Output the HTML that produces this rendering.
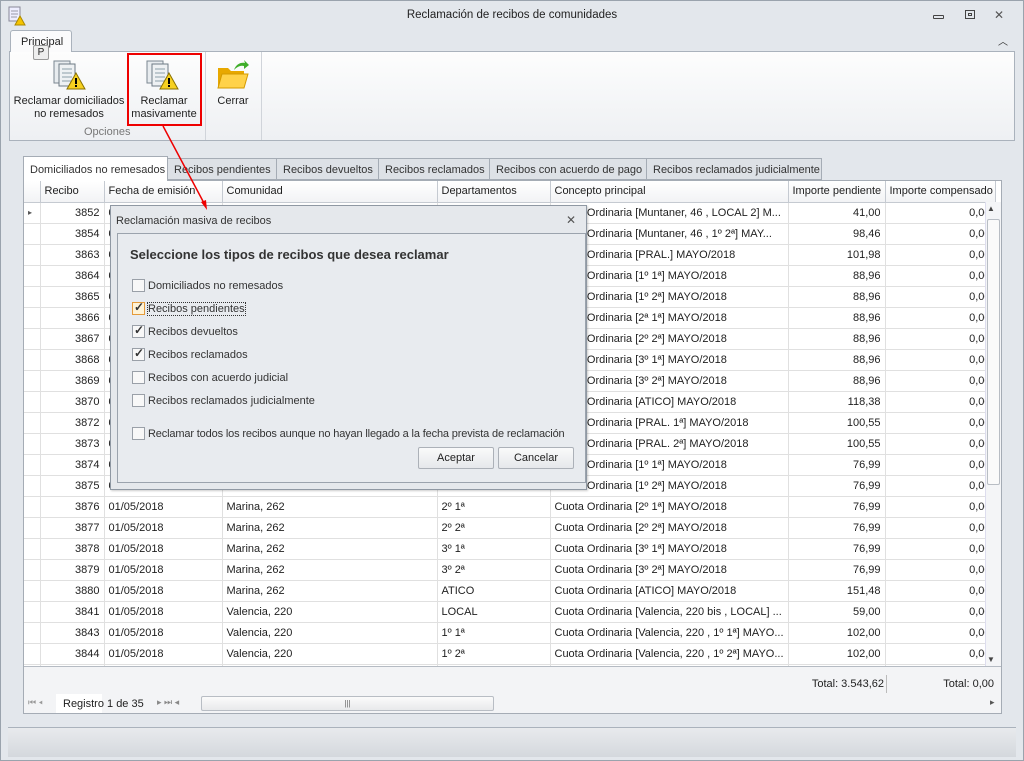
<!DOCTYPE html>
<html><head><meta charset="utf-8">
<style>
*{box-sizing:border-box;margin:0;padding:0}
body{width:1024px;height:761px;overflow:hidden;background:#dfe3e8;font-family:"Liberation Sans",sans-serif;font-size:11px;color:#1e1e1e;position:relative}
.abs{position:absolute;white-space:nowrap}
.win{left:0;top:0;width:1024px;height:761px;border:1px solid #9aa3ad;background:#e3e7ec}
.title{left:0;top:0;width:1024px;height:30px;text-align:center;line-height:30px;font-size:11.5px;color:#222}
.ribbon{left:9px;top:51px;width:1006px;height:90px;background:linear-gradient(#fdfdfd,#eef0f3);border:1px solid #aab2bc}
.tabP{left:10px;top:30px;width:62px;height:22px;background:#fbfbfc;border:1px solid #aab2bc;border-bottom:none;border-radius:3px 3px 0 0;padding:5px 0 0 10px;font-size:11px}
.btn{text-align:center;font-size:11px;line-height:13px;color:#222}
.grid{left:23px;top:180px;width:979px;height:534px;border:1px solid #a5acb5;background:#fff;overflow:hidden}
table{border-collapse:collapse;table-layout:fixed;position:absolute;left:0;top:0;width:971px}
td{height:21px;border-right:1px solid #e0e0e0;border-bottom:1px solid #e0e0e0;white-space:nowrap;overflow:hidden;padding:0 4px;font-size:11px}
th{height:21px;background:linear-gradient(#fff,#f2f3f5);border-right:1px solid #c5cad1;border-bottom:1px solid #c5cad1;font-weight:normal;text-align:left;padding:0 4px;font-size:11px;white-space:nowrap;overflow:hidden}
td.r{text-align:right}
.tab{top:158px;height:22px;border:1px solid #a5acb5;background:#dde1e6;padding:5px 0 0 6px;font-size:11px;color:#333}
.cb{display:inline-block;width:13px;height:13px;border:1px solid #9aa0a8;background:#f8f8f8;vertical-align:-3px;margin-right:3px;position:relative}
.opt{left:132px;font-size:11px;color:#333}
.b2{height:22px;border:1px solid #acb1b8;background:linear-gradient(#fafafa,#e6e8eb);border-radius:2px;text-align:center;line-height:20px;font-size:11px}
</style></head><body>
<div class="abs win"></div>
<div class="abs title">Reclamación de recibos  de comunidades</div>
<svg class="abs" style="left:7px;top:6px" width="20" height="20"><rect x="2" y="1" width="11" height="14" fill="#eef" stroke="#889"/><path d="M4 5h7M4 8h7M4 11h6" stroke="#99a"/><path d="M13 10l5 9h-10z" fill="#f5c400" stroke="#a80"/></svg>
<div class="abs" style="left:933px;top:15px;width:11px;height:4px;border:1px solid #444;border-radius:1px"></div>
<div class="abs" style="left:965px;top:10px;width:10px;height:9px;border:1px solid #444"><div style="margin:2px;width:4px;height:3px;border:1px solid #444"></div></div>
<div class="abs" style="left:994px;top:8px;font-size:12px;color:#555">✕</div>
<div class="abs" style="left:998px;top:33px;font-size:10px;color:#333">︿</div>
<div class="abs ribbon"></div>
<div class="abs tabP">Principal</div>
<div class="abs" style="left:33px;top:45px;width:16px;height:15px;border:1px solid #999;background:#eee;font-size:10px;text-align:center;line-height:13px;border-radius:2px">P</div>
<svg class="abs" style="left:53px;top:59px" width="34" height="32"><rect x="1" y="2" width="16" height="22" fill="#e8ecef" stroke="#7a8690"/><rect x="6" y="5" width="16" height="22" fill="#eef1f3" stroke="#6e7a85"/><path d="M9 10h10M9 14h10M9 18h10M9 22h10" stroke="#8ca0a8"/><path d="M23 14l9 16h-18z" fill="#f6d020" stroke="#8a7000"/><rect x="22" y="19" width="2" height="6" fill="#000"/><rect x="22" y="26" width="2" height="2" fill="#000"/></svg>
<svg class="abs" style="left:146px;top:59px" width="34" height="32"><rect x="1" y="2" width="16" height="22" fill="#e8ecef" stroke="#7a8690"/><rect x="6" y="5" width="16" height="22" fill="#eef1f3" stroke="#6e7a85"/><path d="M9 10h10M9 14h10M9 18h10M9 22h10" stroke="#8ca0a8"/><path d="M23 14l9 16h-18z" fill="#f6d020" stroke="#8a7000"/><rect x="22" y="19" width="2" height="6" fill="#000"/><rect x="22" y="26" width="2" height="2" fill="#000"/></svg>
<svg class="abs" style="left:216px;top:58px" width="34" height="32"><path d="M2 10h10l3 3h13v17H2z" fill="#e8a800"/><path d="M2 30l4-14h26l-4 14z" fill="#ffd24a" stroke="#d49a00"/><path d="M18 12c2-6 7-8 11-7l-1-3 5 5-5 4v-3c-4-1-7 1-10 4z" fill="#3fae2a"/></svg>
<div class="abs btn" style="left:11px;top:95px;width:116px">Reclamar domiciliados<br>no remesados</div>
<div class="abs btn" style="left:127px;top:95px;width:74px">Reclamar<br>masivamente</div>
<div class="abs btn" style="left:212px;top:95px;width:42px">Cerrar</div>
<div class="abs" style="left:84px;top:126px;color:#777;font-size:11px">Opciones</div>
<div class="abs" style="left:205px;top:52px;width:1px;height:88px;background:#d0d4da"></div>
<div class="abs" style="left:261px;top:52px;width:1px;height:88px;background:#d0d4da"></div>
<div class="abs" style="left:127px;top:53px;width:75px;height:73px;border:2px solid #e00"></div>
<div class="abs tab" style="left:167px;width:110px">Recibos pendientes</div>
<div class="abs tab" style="left:276px;width:103px">Recibos devueltos</div>
<div class="abs tab" style="left:378px;width:112px">Recibos reclamados</div>
<div class="abs tab" style="left:489px;width:158px">Recibos con acuerdo de pago</div>
<div class="abs tab" style="left:646px;width:176px">Recibos reclamados judicialmente</div>
<div class="abs tab" style="left:23px;top:156px;height:25px;width:145px;background:#fff;border-bottom:none;z-index:2;padding-top:7px">Domiciliados no remesados</div>
<div class="abs grid">
<table>
<colgroup><col style="width:16px"><col style="width:64px"><col style="width:118px"><col style="width:215px"><col style="width:113px"><col style="width:238px"><col style="width:97px"><col style="width:110px"></colgroup>
<tr><th></th><th>Recibo</th><th>Fecha de emisión</th><th>Comunidad</th><th>Departamentos</th><th>Concepto principal</th><th>Importe pendiente</th><th>Importe compensado</th></tr>
<tr><td style="font-size:8px;color:#555">▸</td><td class="r">3852</td><td>01/05/2018</td><td>Muntaner, 46</td><td>LOCAL 2</td><td>Cuota Ordinaria [Muntaner, 46 , LOCAL 2] M...</td><td class="r">41,00</td><td class="r">0,00</td></tr>
<tr><td></td><td class="r">3854</td><td>01/05/2018</td><td>Muntaner, 46</td><td>1º 2ª</td><td>Cuota Ordinaria [Muntaner, 46 , 1º 2ª] MAY...</td><td class="r">98,46</td><td class="r">0,00</td></tr>
<tr><td></td><td class="r">3863</td><td>01/05/2018</td><td>Marina</td><td>PRAL.</td><td>Cuota Ordinaria [PRAL.] MAYO/2018</td><td class="r">101,98</td><td class="r">0,00</td></tr>
<tr><td></td><td class="r">3864</td><td>01/05/2018</td><td>Marina</td><td>1º 1ª</td><td>Cuota Ordinaria [1º 1ª] MAYO/2018</td><td class="r">88,96</td><td class="r">0,00</td></tr>
<tr><td></td><td class="r">3865</td><td>01/05/2018</td><td>Marina</td><td>1º 2ª</td><td>Cuota Ordinaria [1º 2ª] MAYO/2018</td><td class="r">88,96</td><td class="r">0,00</td></tr>
<tr><td></td><td class="r">3866</td><td>01/05/2018</td><td>Marina</td><td>2ª 1ª</td><td>Cuota Ordinaria [2ª 1ª] MAYO/2018</td><td class="r">88,96</td><td class="r">0,00</td></tr>
<tr><td></td><td class="r">3867</td><td>01/05/2018</td><td>Marina</td><td>2º 2ª</td><td>Cuota Ordinaria [2º 2ª] MAYO/2018</td><td class="r">88,96</td><td class="r">0,00</td></tr>
<tr><td></td><td class="r">3868</td><td>01/05/2018</td><td>Marina</td><td>3º 1ª</td><td>Cuota Ordinaria [3º 1ª] MAYO/2018</td><td class="r">88,96</td><td class="r">0,00</td></tr>
<tr><td></td><td class="r">3869</td><td>01/05/2018</td><td>Marina</td><td>3º 2ª</td><td>Cuota Ordinaria [3º 2ª] MAYO/2018</td><td class="r">88,96</td><td class="r">0,00</td></tr>
<tr><td></td><td class="r">3870</td><td>01/05/2018</td><td>Marina</td><td>ATICO</td><td>Cuota Ordinaria [ATICO] MAYO/2018</td><td class="r">118,38</td><td class="r">0,00</td></tr>
<tr><td></td><td class="r">3872</td><td>01/05/2018</td><td>Marina</td><td>PRAL. 1ª</td><td>Cuota Ordinaria [PRAL. 1ª] MAYO/2018</td><td class="r">100,55</td><td class="r">0,00</td></tr>
<tr><td></td><td class="r">3873</td><td>01/05/2018</td><td>Marina</td><td>PRAL. 2ª</td><td>Cuota Ordinaria [PRAL. 2ª] MAYO/2018</td><td class="r">100,55</td><td class="r">0,00</td></tr>
<tr><td></td><td class="r">3874</td><td>01/05/2018</td><td>Marina</td><td>1º 1ª</td><td>Cuota Ordinaria [1º 1ª] MAYO/2018</td><td class="r">76,99</td><td class="r">0,00</td></tr>
<tr><td></td><td class="r">3875</td><td>01/05/2018</td><td>Marina</td><td>1º 2ª</td><td>Cuota Ordinaria [1º 2ª] MAYO/2018</td><td class="r">76,99</td><td class="r">0,00</td></tr>
<tr><td></td><td class="r">3876</td><td>01/05/2018</td><td>Marina, 262</td><td>2º 1ª</td><td>Cuota Ordinaria [2º 1ª] MAYO/2018</td><td class="r">76,99</td><td class="r">0,00</td></tr>
<tr><td></td><td class="r">3877</td><td>01/05/2018</td><td>Marina, 262</td><td>2º 2ª</td><td>Cuota Ordinaria [2º 2ª] MAYO/2018</td><td class="r">76,99</td><td class="r">0,00</td></tr>
<tr><td></td><td class="r">3878</td><td>01/05/2018</td><td>Marina, 262</td><td>3º 1ª</td><td>Cuota Ordinaria [3º 1ª] MAYO/2018</td><td class="r">76,99</td><td class="r">0,00</td></tr>
<tr><td></td><td class="r">3879</td><td>01/05/2018</td><td>Marina, 262</td><td>3º 2ª</td><td>Cuota Ordinaria [3º 2ª] MAYO/2018</td><td class="r">76,99</td><td class="r">0,00</td></tr>
<tr><td></td><td class="r">3880</td><td>01/05/2018</td><td>Marina, 262</td><td>ATICO</td><td>Cuota Ordinaria [ATICO] MAYO/2018</td><td class="r">151,48</td><td class="r">0,00</td></tr>
<tr><td></td><td class="r">3841</td><td>01/05/2018</td><td>Valencia, 220</td><td>LOCAL</td><td>Cuota Ordinaria [Valencia, 220 bis , LOCAL] ...</td><td class="r">59,00</td><td class="r">0,00</td></tr>
<tr><td></td><td class="r">3843</td><td>01/05/2018</td><td>Valencia, 220</td><td>1º 1ª</td><td>Cuota Ordinaria [Valencia, 220 , 1º 1ª] MAYO...</td><td class="r">102,00</td><td class="r">0,00</td></tr>
<tr><td></td><td class="r">3844</td><td>01/05/2018</td><td>Valencia, 220</td><td>1º 2ª</td><td>Cuota Ordinaria [Valencia, 220 , 1º 2ª] MAYO...</td><td class="r">102,00</td><td class="r">0,00</td></tr>
<tr><td></td><td class="r">3845</td><td>01/05/2018</td><td>Valencia, 220</td><td>2º 1ª</td><td>Cuota Ordinaria [Valencia, 220 , 2º 1ª] MAYO...</td><td class="r">102,00</td><td class="r">0,00</td></tr>
</table>
<div class="abs" style="left:961px;top:21px;width:16px;height:465px;background:#f4f5f7;border-left:1px solid #dde"></div>
<div class="abs" style="left:963px;top:23px;font-size:8px;color:#444">▲</div>
<div class="abs" style="left:963px;top:38px;width:13px;height:266px;background:#fafafa;border:1px solid #b8bdc4;border-radius:2px"></div>
<div class="abs" style="left:963px;top:474px;font-size:8px;color:#444">▼</div>
<div class="abs" style="left:0;top:485px;width:977px;height:32px;background:#f3f4f6;border-top:1px solid #b5bbc3"></div>
<div class="abs" style="left:770px;top:497px;width:90px;text-align:right">Total: 3.543,62</div>
<div class="abs" style="left:862px;top:494px;width:1px;height:18px;background:#bbb"></div>
<div class="abs" style="left:880px;top:497px;width:90px;text-align:right">Total: 0,00</div>
<div class="abs" style="left:0;top:512px;width:977px;height:22px;background:#f3f4f6"></div>
<div class="abs" style="left:4px;top:516px;font-size:9px;color:#999">⏮ ◂</div>
<div class="abs" style="left:32px;top:513px;width:46px;height:20px;background:#fff"></div>
<div class="abs" style="left:39px;top:517px">Registro 1 de 35</div>
<div class="abs" style="left:133px;top:516px;font-size:9px;color:#888">▸ ⏭ ◂</div>
<div class="abs" style="left:177px;top:515px;width:293px;height:15px;background:linear-gradient(#fbfbfb,#e8e9eb);border:1px solid #b8bdc4;border-radius:2px;text-align:center;font-size:8px;line-height:13px;color:#666">|||</div>
<div class="abs" style="left:966px;top:516px;font-size:9px;color:#555">▸</div>
</div>
<div class="abs" style="left:8px;top:727px;width:1008px;height:30px;background:linear-gradient(#e8eaed,#d4d8dd);border-top:1px solid #aab2bc"></div>
<div class="abs" style="left:110px;top:205px;width:477px;height:285px;background:#e5e8ec;border:1px solid #8f98a3;box-shadow:1px 1px 2px rgba(0,0,0,.2)"></div>
<div class="abs" style="left:116px;top:215px;font-size:11px;color:#333">Reclamación masiva de recibos</div>
<div class="abs" style="left:566px;top:213px;font-size:12px;color:#555">✕</div>
<div class="abs" style="left:117px;top:233px;width:469px;height:250px;border:1px solid #9ba3ad;background:#e8ebef"></div>
<div class="abs" style="left:130px;top:247px;font-size:13px;font-weight:bold;color:#333">Seleccione los tipos de recibos que desea reclamar</div>
<div class="abs opt" style="top:279px"><span class="cb"></span>Domiciliados no remesados</div>
<div class="abs opt" style="top:302px"><span class="cb" style="border-color:#e49a3a;background:#fff3d6"><b style="position:absolute;left:1px;top:-3px;font-size:12px">✓</b></span><span style="outline:1px dotted #333">Recibos pendientes</span></div>
<div class="abs opt" style="top:325px"><span class="cb"><b style="position:absolute;left:1px;top:-3px;font-size:12px">✓</b></span>Recibos devueltos</div>
<div class="abs opt" style="top:348px"><span class="cb"><b style="position:absolute;left:1px;top:-3px;font-size:12px">✓</b></span>Recibos reclamados</div>
<div class="abs opt" style="top:371px"><span class="cb"></span>Recibos con acuerdo judicial</div>
<div class="abs opt" style="top:394px"><span class="cb"></span>Recibos reclamados judicialmente</div>
<div class="abs opt" style="top:427px;letter-spacing:-0.15px"><span class="cb"></span>Reclamar todos los recibos aunque no hayan llegado a la fecha prevista de reclamación</div>
<div class="abs b2" style="left:418px;top:447px;width:76px">Aceptar</div>
<div class="abs b2" style="left:498px;top:447px;width:76px">Cancelar</div>
<svg class="abs" style="left:0;top:0" width="1024" height="761"><line x1="163" y1="126" x2="205" y2="205" stroke="#e00" stroke-width="1.5"/><path d="M207 210l-6-8 5-2z" fill="#e00"/></svg>
</body></html>
